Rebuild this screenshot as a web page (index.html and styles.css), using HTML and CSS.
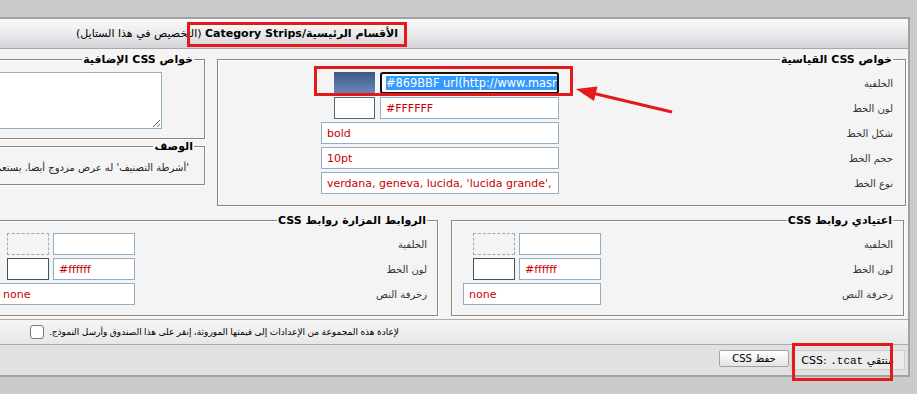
FILE: index.html
```html
<!DOCTYPE html>
<html lang="ar" dir="rtl">
<head>
    <meta charset="UTF-8">
    <title>تحرير الستايل - Category Strips</title>
    <link rel="stylesheet" href="styles.css">
</head>
<body>
<div class="page">
    <div class="style-table">
        <div class="tcat">
            <b>الأقسام الرئيسية/Category Strips</b> (التخصيص في هذا الستايل)
        </div>

        <div class="alt">
            <div class="top-row">
                <!-- standard properties -->
                <fieldset class="box std-box">
                    <legend>خواص CSS القياسية</legend>
                    <div class="prop-grid std-grid">
                        <span class="prop-label">الخلفية</span>
                        <div class="ctrl">
                            <div class="field focused" dir="ltr"><span class="sel">#869BBF url(http://www.masr4arab.com/forum/images/cat.gif) repeat-x</span></div>
                            <span class="swatch swatch-bg"></span>
                        </div>

                        <span class="prop-label">لون الخط</span>
                        <div class="ctrl">
                            <input class="field" type="text" dir="ltr" value="#FFFFFF">
                            <span class="swatch swatch-white"></span>
                        </div>

                        <span class="prop-label">شكل الخط</span>
                        <div class="ctrl">
                            <input class="field wide" type="text" dir="ltr" value="bold">
                        </div>

                        <span class="prop-label">حجم الخط</span>
                        <div class="ctrl">
                            <input class="field wide" type="text" dir="ltr" value="10pt">
                        </div>

                        <span class="prop-label">نوع الخط</span>
                        <div class="ctrl">
                            <input class="field wide" type="text" dir="ltr" value="verdana, geneva, lucida, 'lucida grande', arial, helvetica, sans-serif">
                        </div>
                    </div>
                </fieldset>

                <div class="side-stack">
                    <fieldset class="box extra-box">
                        <legend>خواص CSS الإضافية</legend>
                        <textarea class="extra-css" dir="ltr"></textarea>
                    </fieldset>
                    <fieldset class="box desc-box">
                        <legend>الوصف</legend>
                        <div class="desc">'أشرطة التصنيف' له عرض مزدوج أيضا. يستعمل لعرض عناوين الأقسام في الصفحة الرئيسية وفي صفحات المنتدى.</div>
                    </fieldset>
                </div>
            </div>

            <div class="bottom-row">
                <fieldset class="box links-box links-normal">
                    <legend>اعتيادي روابط CSS</legend>
                    <div class="prop-grid links-grid">
                        <span class="prop-label">الخلفية</span>
                        <div class="ctrl">
                            <input class="field" type="text" dir="ltr" value="">
                            <span class="swatch swatch-empty"></span>
                        </div>

                        <span class="prop-label">لون الخط</span>
                        <div class="ctrl">
                            <input class="field" type="text" dir="ltr" value="#ffffff">
                            <span class="swatch swatch-dark"></span>
                        </div>

                        <span class="prop-label">زخرفة النص</span>
                        <div class="ctrl">
                            <input class="field wide" type="text" dir="ltr" value="none">
                        </div>
                    </div>
                </fieldset>

                <fieldset class="box links-box links-visited">
                    <legend>الروابط المزارة روابط CSS</legend>
                    <div class="prop-grid links-grid">
                        <span class="prop-label">الخلفية</span>
                        <div class="ctrl">
                            <input class="field" type="text" dir="ltr" value="">
                            <span class="swatch swatch-empty"></span>
                        </div>

                        <span class="prop-label">لون الخط</span>
                        <div class="ctrl">
                            <input class="field" type="text" dir="ltr" value="#ffffff">
                            <span class="swatch swatch-dark"></span>
                        </div>

                        <span class="prop-label">زخرفة النص</span>
                        <div class="ctrl">
                            <input class="field wide" type="text" dir="ltr" value="none">
                        </div>
                    </div>
                </fieldset>
            </div>
        </div>

        <div class="revert-row">
            <span>لإعادة هذه المجموعة من الإعدادات إلى قيمتها الموروثة، إنقر على هذا الصندوق وأرسل النموذج.</span>
            <span class="check"></span>
        </div>

        <div class="submit-row">
            <span class="selector">منتقي <span dir="ltr">CSS: <code>.tcat</code></span></span>
            <button class="button" type="button">حفظ CSS</button>
        </div>
    </div>
</div>

<!-- red annotations drawn over the screenshot -->
<svg class="marks" width="917" height="394" viewBox="0 0 917 394">
    <g fill="none" stroke="#e3191c" stroke-width="3">
        <rect x="188.5" y="23.5" width="217" height="22"/>
        <rect x="315.5" y="67.5" width="256" height="27"/>
        <rect x="793.5" y="344.5" width="98" height="35"/>
        <line x1="672" y1="112" x2="592" y2="93"/>
    </g>
    <polygon fill="#e3191c" points="576,89 597.5,86.5 594,101"/>
</svg>
</body>
</html>
```

FILE: styles.css
```css
html, body {
    margin: 0;
}

body {
    position: relative;
    height: 394px;
    overflow: hidden;
    background: #cbcbcb;
    font-family: "DejaVu Sans", sans-serif;
    font-size: 11px;
    color: #000;
}

.page {
    padding: 17px 7px 0 0;
}

.style-table {
    width: 1346px;
    box-sizing: border-box;
    border: 2px solid #a2a2a2;
    background: #f4f4f4;
}

.tcat {
    height: 29px;
    line-height: 29px;
    text-align: center;
    white-space: nowrap;
    border-bottom: 1px solid #a8a8a8;
    background: linear-gradient(#fbfbfb, #ebebed 50%, #d4d4d8);
}

.alt {
    padding: 4px 0 3px 0;
}

.top-row {
    display: flex;
    align-items: flex-start;
    gap: 12px;
    padding-right: 2px;
}

.bottom-row {
    display: flex;
    gap: 13px;
    margin-top: 8px;
    padding-right: 4px;
}

/* fieldsets */
.box {
    margin: 0;
    min-width: 0;
    box-sizing: border-box;
    padding: 0 10px;
    border: 1px solid #878787;
    box-shadow: inset 1px 1px 0 #fff, 1px 1px 0 #fff;
}

.box legend {
    padding: 0 1px;
    font-weight: bold;
    line-height: 13px;
}

.std-box {
    flex: none;
    width: 689px;
    padding: 0 12px 11px;
}

.side-stack {
    flex: 1;
    display: flex;
    flex-direction: column;
    gap: 1px;
}

.extra-box {
    height: 86px;
}

.extra-css {
    display: block;
    width: 420px;
    height: 57px;
    box-sizing: border-box;
    margin: 6px 32px 0 0;
    border: 1px solid #93adc2;
    background: #fff;
    resize: both;
}

.desc-box {
    height: 45px;
}

.desc {
    margin: 9px 5px 0 0;
    font-size: 10px;
    white-space: nowrap;
    color: #222;
}

.links-box {
    padding: 0 10px 10px;
}

.links-normal {
    flex: none;
    width: 453px;
}

.links-visited {
    flex: 1;
}

/* property rows */
.prop-grid {
    display: grid;
    grid-auto-rows: 22px;
    row-gap: 3px;
    margin-top: 6px;
}

.std-grid {
    grid-template-columns: 334px 238px;
}

.links-grid {
    grid-template-columns: 292px 138px;
}

.prop-label {
    align-self: center;
    font-size: 10px;
    color: #333;
}

.ctrl {
    display: flex;
    gap: 5px;
}

.links-grid .ctrl {
    gap: 4px;
}

.field {
    width: 179px;
    height: 22px;
    box-sizing: border-box;
    margin: 0;
    padding: 0 5px;
    border: 1px solid #93adc2;
    background: #fff;
    color: #c80000;
    font-family: "DejaVu Sans", sans-serif;
    font-size: 11px;
    line-height: 20px;
    outline: none;
}

.links-grid .field {
    width: 82px;
}

.field.wide,
.links-grid .field.wide {
    width: 100%;
}

.field.focused {
    overflow: hidden;
    white-space: nowrap;
    border: 2px solid #111;
    border-radius: 3px;
    padding: 0 4px;
    font-size: 11.4px;
    line-height: 18px;
}

.sel {
    background: #3399ff;
    color: #fff;
}

.swatch {
    width: 41px;
    height: 22px;
    box-sizing: border-box;
}

.swatch-bg {
    background: linear-gradient(#3d5886, #6d89b9);
}

.swatch-white {
    background: #fff;
    border: 1px solid #5a6470;
}

.links-grid .swatch {
    width: 42px;
}

.swatch-empty {
    border: 1px dashed #93adc2;
}

.swatch-dark {
    background: #fff;
    border: 1px solid #44525f;
}

/* footer rows */
.revert-row {
    display: flex;
    align-items: center;
    gap: 5px;
    height: 24px;
    padding-right: 509px;
    border-top: 1px solid #aaa;
    border-bottom: 1px solid #aaa;
    background: linear-gradient(#f6f6f6, #e7e7e7);
    font-size: 9px;
    word-spacing: -0.4px;
    white-space: nowrap;
}

.check {
    width: 12px;
    height: 12px;
    border: 1px solid #777;
    border-radius: 3px;
    background: #fff;
}

.submit-row {
    display: flex;
    align-items: flex-start;
    gap: 2px;
    height: 30px;
    padding: 5px 3px 0 0;
    box-sizing: border-box;
    background: #e1e1e1;
}

.selector {
    width: 114px;
    height: 20px;
    line-height: 20px;
    box-sizing: border-box;
    padding-right: 10px;
    border: 1px solid #cfcfcf;
    background: #ececec;
    white-space: nowrap;
}

.selector code {
    font-family: "Liberation Mono", monospace;
    font-size: 11px;
}

.button {
    width: 70px;
    height: 17px;
    padding: 0;
    border: 1px solid #a3a3a3;
    border-radius: 2px;
    background: linear-gradient(#fff, #e4e4e4);
    font-family: "DejaVu Sans", sans-serif;
    font-size: 10px;
    line-height: 15px;
}

.marks {
    position: absolute;
    top: 0;
    left: 0;
}
```
